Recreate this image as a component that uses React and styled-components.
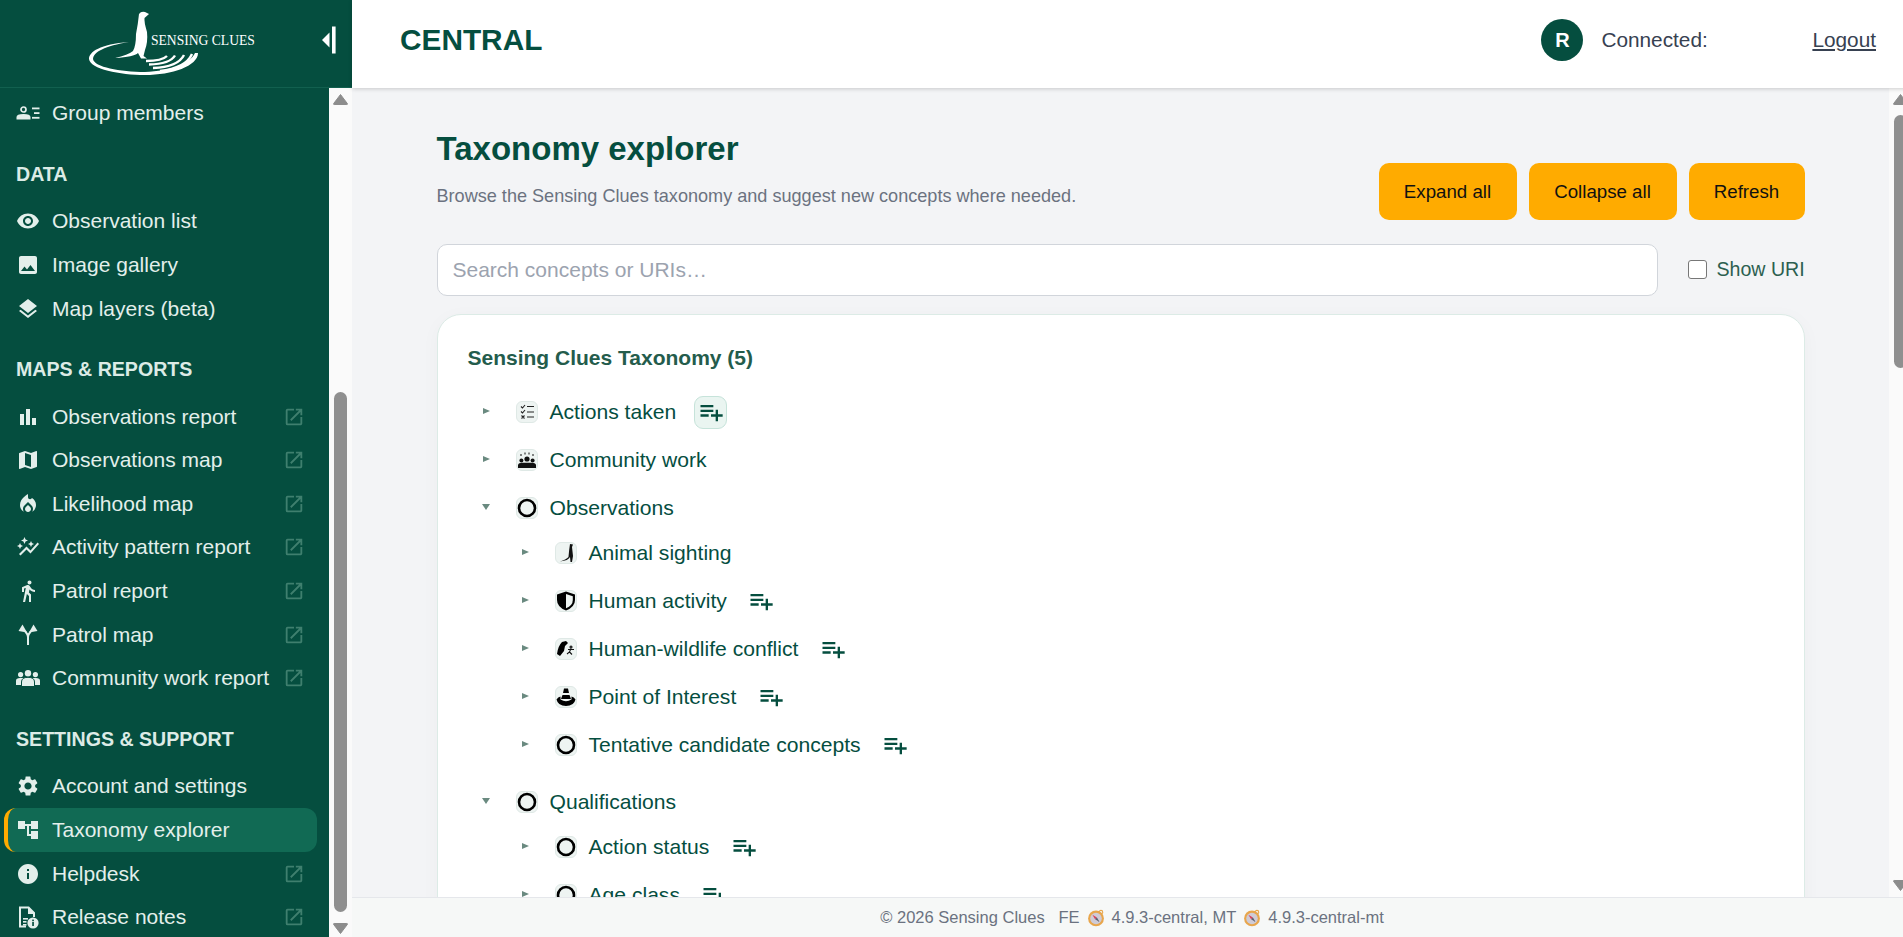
import React from "react";
import styled, { createGlobalStyle } from "styled-components";
import {
  MdVisibility, MdImage, MdLayers, MdBarChart, MdMap, MdLocalFireDepartment, MdAutoGraph, MdDirectionsWalk,
  MdSettings, MdAccountTree, MdInfo, MdOpenInNew, MdPlaylistAdd,
} from "react-icons/md";

const Global = createGlobalStyle`
  html, body { margin: 0; padding: 0; width: 1903px; height: 937px; overflow: hidden; background: #f3f4f6; }
  body, input, button { font-family: "Liberation Sans", Arial, sans-serif; }
  * { box-sizing: border-box; }
`;

const Shell = styled.div`
  display: flex; width: 1912px; height: 937px; align-items: flex-start;
`;
const Sidebar = styled.aside`
  flex: none; width: 352px; height: 940px; background: #054e3f; display: flex; flex-direction: column;
`;
const Brand = styled.div`
  flex: none; height: 88px; display: flex; align-items: center; justify-content: space-between;
  padding: 0 16px 0 85px; border-bottom: 1px solid #12604f;
`;
const CollapseButton = styled.button`
  border: 0; background: none; padding: 0; display: flex; width: 15px; height: 30px; margin-bottom: 7px;
`;
const SideBody = styled.div`
  flex: 1; min-height: 0; display: flex;
`;
const NavScroll = styled.nav`
  flex: 1; min-width: 0; overflow: hidden; padding-top: 3.5px;
`;
const Rail = styled.div`
  flex: none; width: 23px; background: #fafafa; display: flex; flex-direction: column;
`;
const RailButton = styled.svg`
  flex: none; display: block; width: 23px; height: 23px;
`;
const RailTrack = styled.div`
  flex: 1; min-height: 0; padding-left: 5px;
`;
const RailThumb = styled.div`
  width: 13px; height: ${p => p.$size}px; margin-top: ${p => p.$offset}px; background: #8f8f8f; border-radius: 7px;
`;
const SectionLabel = styled.div`
  height: 30px; line-height: 30px; margin: 24px 0 10.5px; padding-left: 16px;
  color: #dcebe6; font-weight: 700; font-size: 19.6px;
`;
const NavItem = styled.a`
  display: flex; align-items: center; height: 43.6px; margin: 0 12px 0 4px; padding-left: ${p => (p.$active ? "8px" : "12px")};
  color: #e3efeb; font-size: 21px; text-decoration: none; border-radius: 12px;
  background: ${p => (p.$active ? "#116a54" : "transparent")};
  border-left: ${p => (p.$active ? "4px solid #ffab00" : "0")};
`;
const NavIcon = styled.span`
  flex: none; width: 24px; height: 24px; margin-right: 12px; display: flex; align-items: center; justify-content: center; font-size: 24px;
`;
const NavText = styled.span` flex: 1; white-space: nowrap; `;
const ExternalIcon = styled(MdOpenInNew)`
  flex: none; color: #3f7f6e; font-size: 22px; margin-right: 12px;
`;

const RightColumn = styled.div`
  flex: none; width: 1560px; height: 937px; display: flex; flex-direction: column;
`;
const TopBar = styled.header`
  flex: none; height: 88px; background: #fff; display: flex; align-items: center; padding: 0 36px 8px 48px;
  box-shadow: 0 1px 4px rgba(0,0,0,.18); position: relative; z-index: 2;
`;
const AppName = styled.div`
  flex: 1; color: #054e3f; font-weight: 700; font-size: 29.8px;
`;
const Avatar = styled.div`
  width: 42px; height: 42px; border-radius: 50%; background: #054e3f; color: #fff; font-weight: 700; font-size: 20px;
  display: flex; align-items: center; justify-content: center; margin-right: 18px;
`;
const Connected = styled.div` color: #374151; font-size: 20.8px; width: 211px; `;
const Logout = styled.a` color: #374151; font-size: 20.8px; text-decoration: underline; `;
const MainArea = styled.div`
  flex: 1; min-height: 0; display: flex; background: #f3f4f6;
`;
const MainScroll = styled.main`
  flex: 1; min-width: 0; overflow: hidden;
`;
const Page = styled.div`
  width: 1368px; margin: 0 auto; padding-top: 41px;
`;
const PageHead = styled.div`
  display: flex; justify-content: space-between; align-items: flex-end; height: 91px;
`;
const TitleBlock = styled.div` align-self: flex-start; `;
const PageTitle = styled.h1`
  margin: 0; color: #054e3f; font-size: 33px; line-height: 40px; font-weight: 700;
`;
const PageSub = styled.p`
  margin: 13px 0 0; color: #6b7280; font-size: 18.1px; line-height: 28px;
`;
const Actions = styled.div` display: flex; gap: 12px; `;
const ActionButton = styled.button`
  height: 57px; width: ${p => p.$width}px; padding: 0; background: #ffab00; border: 0; border-radius: 10px;
  color: #111; font-size: 18.7px;
`;
const SearchRow = styled.div`
  display: flex; align-items: center; margin-top: 24px;
`;
const SearchInput = styled.input`
  flex: none; width: 1221px; height: 52px; padding: 0 15px; border: 1px solid #d1d5db; border-radius: 10px; background: #fff;
  font-size: 21px; color: #111; outline: 0;
  &::placeholder { color: #9ca3af; opacity: 1; }
`;
const UriLabel = styled.label`
  display: flex; align-items: center; margin-left: 30px; padding-bottom: 2px; color: #2c5f50; font-size: 19.6px; white-space: nowrap;
`;
const UriBox = styled.span`
  width: 19px; height: 19px; border: 1.5px solid #777; border-radius: 3px; background: #fff; margin-right: 10px;
`;
const Panel = styled.section`
  margin-top: 18px; padding: 29px 30px 0; min-height: 900px; background: #fff;
  border: 1px solid #dcebe6; border-radius: 24px; box-shadow: 0 4px 20px rgba(0,0,0,.03);
`;
const PanelTitle = styled.h2`
  margin: 0 0 16px; color: #245c4c; font-size: 21px; line-height: 28px; font-weight: 700;
`;
const ChildList = styled.div`
  margin: -3px 0 9px 39px;
`;
const Row = styled.div`
  display: flex; align-items: center; height: 48px; padding-left: 15px;
`;
const Caret = styled.span`
  flex: none; width: 0; height: 0; margin-top: -3px;
  ${p => p.$open
    ? "border-left: 4px solid transparent; border-right: 4px solid transparent; border-top: 6px solid #6a8a80; margin-left: -1px; margin-right: 26px;"
    : "border-top: 3.5px solid transparent; border-bottom: 3.5px solid transparent; border-left: 7px solid #6a8a80; margin-right: 26px;"}
`;
const IconBox = styled.span`
  flex: none; width: 22px; height: 22px; border-radius: 6px; background: #eef4f2; border: 1px solid #dfe9e6;
  display: flex; align-items: center; justify-content: center; margin-right: 12px;
`;
const RowText = styled.span`
  color: #054e3f; font-size: 21.1px; white-space: nowrap;
`;
const AddButton = styled.button`
  flex: none; width: 33px; height: 33px; margin-left: 18px; padding: 0; display: flex; align-items: center; justify-content: center;
  border-radius: 9px; color: #054e3f; font-size: 28px;
  background: ${p => (p.$hover ? "#eaf5f1" : "transparent")};
  border: 1px solid ${p => (p.$hover ? "#c6e3da" : "transparent")};
`;
const Footer = styled.footer`
  flex: none; height: 40px; background: #f6f8f7; border-top: 1px solid #e5e7eb; position: relative; z-index: 2;
  display: flex; align-items: center; justify-content: center; color: #6b7280; font-size: 16.5px; white-space: pre;
`;
const Compass = styled.svg` width: 18px; height: 18px; margin: 0 7px; flex: none; `;

const ArrowUp = () => (
  <RailButton viewBox="0 0 23 23"><path d="M11.5 6.5 L18.3 15.5 Q18.8 16.5 17.8 16.5 H5.2 Q4.2 16.5 4.7 15.5Z" fill="#8c8c8c" stroke="#8c8c8c" strokeLinejoin="round" /></RailButton>
);
const ArrowDown = () => (
  <RailButton viewBox="0 0 23 23"><path d="M11.5 16.5 L18.3 7.5 Q18.8 6.5 17.8 6.5 H5.2 Q4.2 6.5 4.7 7.5Z" fill="#8c8c8c" stroke="#8c8c8c" strokeLinejoin="round" /></RailButton>
);

const Logo = () => (
  <svg width="175" height="72" viewBox="85 4 175 72" fill="#fff">
    <path d="M139 10 Q141 7 145 8 L149 10 L144.5 14 Q144 18 147 28 Q148 38 145 46 L143.5 52 L147 54.5 L141 54.5 L138 49 Q134 53 115 54 Q128 51 133 47 Q136 42 136 30 Q138 20 139 10Z" />
    <path d="M129 38 C100 40 89 48 89 55 C90 65 120 71 145 71 C172 71 198 62 198 49 L195 49 C190 60 170 67 145 68 C120 68 94 63 93 55 C93 48 105 42 129 38Z" />
    <g fill="none" stroke="#fff" strokeWidth="2.4">
      <path d="M146 57 Q162 57 167 52" />
      <path d="M149 60.5 Q170 60 175 51.5" />
      <path d="M153 64 Q178 63 184 51" />
      <path d="M160 67 Q186 64 192 50" />
    </g>
    <text x="151" y="44" fontFamily="'Liberation Serif', serif" fontSize="13.6" fill="#fff" dy="-3.2">SENSING CLUES</text>
  </svg>
);

const Collapse = () => (
  <svg width="15" height="30" viewBox="0 0 15 30" fill="#fff">
    <path d="M8.5 7.5 L1 15 L8.5 22.5Z" />
    <rect x="11" y="1.5" width="3.6" height="27" />
  </svg>
);

const GroupIcon = () => (
  <svg width="24" height="24" viewBox="0 0 24 24" fill="currentColor">
    <circle cx="7.5" cy="8.5" r="2.5" fill="none" stroke="currentColor" strokeWidth="1.7" />
    <path d="M0.5 18.5 V16 Q0.5 13 7.5 13 Q14.5 13 14.5 16 V18.5Z" />
    <rect x="16" y="6.5" width="7.5" height="1.8" /><rect x="18" y="11.2" width="5.5" height="1.8" /><rect x="16" y="15.9" width="7.5" height="1.8" />
  </svg>
);
const ForkIcon = () => (
  <svg width="24" height="24" viewBox="0 0 24 24" fill="currentColor">
    <path d="M12 22 V14 Q12 11.5 9 8 M12 14 Q12 11.5 15 8" fill="none" stroke="currentColor" strokeWidth="2" />
    <path d="M6.5 1.5 L2.5 8 L11 9.5Z M17.5 1.5 L21.5 8 L13 9.5Z" />
  </svg>
);
const TeamIcon = () => (
  <svg width="24" height="24" viewBox="0 0 24 24" fill="currentColor">
    <circle cx="12" cy="7.2" r="3.2" /><circle cx="4.6" cy="8.6" r="2.6" /><circle cx="19.4" cy="8.6" r="2.6" />
    <path d="M0 19 V14.5 Q0 12 4 12 H20 Q24 12 24 14.5 V19Z" />
    <path d="M5.5 20 V16 Q5.5 11.3 12 11.3 Q18.5 11.3 18.5 16 V20" fill="currentColor" stroke="#054e3f" strokeWidth="1" />
  </svg>
);
const ReleaseIcon = () => (
  <svg width="24" height="24" viewBox="0 0 24 24" fill="currentColor">
    <path fillRule="evenodd" d="M3 1.5 H13 L19 7.5 V12 H17 V9 H12 V3.5 H5 V20.5 H10 V22.5 H3Z" />
    <rect x="7" y="13" width="5" height="1.6" /><rect x="7" y="16" width="3.5" height="1.6" /><rect x="7" y="19" width="3.5" height="1.6" />
    <circle cx="17" cy="18" r="5.6" />
    <rect x="16.2" y="17" width="1.7" height="4" fill="#054e3f" /><rect x="16.2" y="14.6" width="1.7" height="1.6" fill="#054e3f" />
  </svg>
);

const SmallSvg = ({ children }) => <svg width="20" height="20" viewBox="0 0 20 20">{children}</svg>;
const Ring = () => <SmallSvg><circle cx="10" cy="10" r="8" fill="none" stroke="#000" strokeWidth="2.6" /></SmallSvg>;
const Checklist = () => (
  <SmallSvg>
    <g fill="none" stroke="#222" strokeWidth="1.1">
      <path d="M4 4.5 L5.5 6 L8 3M4 9.5 L5.5 11 L8 8M4.5 13.5 L7.5 16.5M7.5 13.5 L4.5 16.5M10 4.5 H17M10 10 H17M10 15 H17" />
    </g>
  </SmallSvg>
);
const People = () => (
  <SmallSvg>
    <g fill="#111">
      <circle cx="10" cy="9" r="2.6" /><circle cx="4.4" cy="10.4" r="2" /><circle cx="15.6" cy="10.4" r="2" />
      <path d="M1 18 V15 Q1.5 12.8 5.5 12.8 H14.5 Q18.5 12.8 19 15 V18Z" />
      <rect x="3.5" y="4" width="1" height="2" /><rect x="7.5" y="2.5" width="1" height="2" /><rect x="11.5" y="2.5" width="1" height="2" /><rect x="15.5" y="4" width="1" height="2" />
    </g>
  </SmallSvg>
);
const Meerkat = () => (
  <SmallSvg>
    <path d="M14 1 L17 1.5 L16 4 L17 13 L16 19 H14.5 L14 14 Q12.5 17.5 4 18.5 Q10 16.5 12.5 14 Q13 7 14 1Z" fill="#111" />
  </SmallSvg>
);
const Shield = () => (
  <SmallSvg>
    <path d="M10 0.5 L19 3.5 V9 Q19 16 10 19.5 Q1 16 1 9 V3.5Z" fill="#000" />
    <path d="M10 3 L16.8 5.2 V9 Q16.8 14.5 10 17.2Z" fill="#eef4f2" />
  </SmallSvg>
);
const Conflict = () => (
  <SmallSvg>
    <path d="M1 15 Q2 7 6 3 L10 2 L12 4 L9 7 L8 12 L4 17Z" fill="#000" />
    <g fill="none" stroke="#111" strokeWidth="1.1"><circle cx="15" cy="8" r="1" /><path d="M15 9.5 L13.5 13 L11 15M13.5 13 L16 15.5M12 10.5 H18" /></g>
  </SmallSvg>
);
const Cone = () => (
  <SmallSvg>
    <path d="M8 1.5 H12 L13 6 H7Z M6.5 8 H13.5 L15 12 H5Z" fill="#000" />
    <path d="M0.5 12.5 Q2 10 4.5 9.5 L4.5 12.5 Q10 16 15.5 12.5 L15.5 9.5 Q18 10 19.5 12.5 Q18 19 10 19 Q2 19 0.5 12.5Z" fill="#000" />
  </SmallSvg>
);

const CompassIcon = () => (
  <Compass viewBox="0 0 20 20">
    <circle cx="10" cy="10.5" r="8.8" fill="#e8a64c" />
    <circle cx="15.5" cy="3.5" r="2" fill="none" stroke="#e8a64c" strokeWidth="1.2" />
    <circle cx="10" cy="10.5" r="6.4" fill="#cfcbd6" />
    <path d="M6 6.5 L11 9.5 L9 11.5Z" fill="#d9405a" />
    <path d="M14 14.5 L9 11.5 L11 9.5Z" fill="#5d5f6e" />
  </Compass>
);

const sections = [
  { items: [{ icon: <GroupIcon />, label: "Group members" }] },
  { title: "DATA", items: [
    { icon: <MdVisibility />, label: "Observation list" },
    { icon: <MdImage />, label: "Image gallery" },
    { icon: <MdLayers />, label: "Map layers (beta)" },
  ] },
  { title: "MAPS & REPORTS", items: [
    { icon: <MdBarChart />, label: "Observations report", ext: true },
    { icon: <MdMap />, label: "Observations map", ext: true },
    { icon: <MdLocalFireDepartment />, label: "Likelihood map", ext: true },
    { icon: <MdAutoGraph />, label: "Activity pattern report", ext: true },
    { icon: <MdDirectionsWalk />, label: "Patrol report", ext: true },
    { icon: <ForkIcon />, label: "Patrol map", ext: true },
    { icon: <TeamIcon />, label: "Community work report", ext: true },
  ] },
  { title: "SETTINGS & SUPPORT", items: [
    { icon: <MdSettings />, label: "Account and settings" },
    { icon: <MdAccountTree />, label: "Taxonomy explorer", active: true },
    { icon: <MdInfo />, label: "Helpdesk", ext: true },
    { icon: <ReleaseIcon />, label: "Release notes", ext: true },
  ] },
];

const tree = [
  { label: "Actions taken", icon: <Checklist />, add: true, hover: true },
  { label: "Community work", icon: <People /> },
  { label: "Observations", icon: <Ring />, open: true, children: [
    { label: "Animal sighting", icon: <Meerkat /> },
    { label: "Human activity", icon: <Shield />, add: true },
    { label: "Human-wildlife conflict", icon: <Conflict />, add: true },
    { label: "Point of Interest", icon: <Cone />, add: true },
    { label: "Tentative candidate concepts", icon: <Ring />, add: true },
  ] },
  { label: "Qualifications", icon: <Ring />, open: true, children: [
    { label: "Action status", icon: <Ring />, add: true },
    { label: "Age class", icon: <Ring />, add: true },
  ] },
];

const TreeNode = ({ node }) => (
  <>
    <Row>
      <Caret $open={node.open} />
      <IconBox>{node.icon}</IconBox>
      <RowText>{node.label}</RowText>
      {node.add && <AddButton $hover={node.hover}><MdPlaylistAdd /></AddButton>}
    </Row>
    {node.children && (
      <ChildList>
        {node.children.map(c => <TreeNode key={c.label} node={c} />)}
      </ChildList>
    )}
  </>
);

export default function App() {
  return (
    <Shell>
      <Global />
      <Sidebar>
        <Brand>
          <Logo />
          <CollapseButton aria-label="Collapse"><Collapse /></CollapseButton>
        </Brand>
        <SideBody>
          <NavScroll>
            {sections.map((s, i) => (
              <div key={i}>
                {s.title && <SectionLabel>{s.title}</SectionLabel>}
                {s.items.map(it => (
                  <NavItem key={it.label} $active={it.active}>
                    <NavIcon>{it.icon}</NavIcon>
                    <NavText>{it.label}</NavText>
                    {it.ext && <ExternalIcon />}
                  </NavItem>
                ))}
              </div>
            ))}
          </NavScroll>
          <Rail>
            <ArrowUp />
            <RailTrack><RailThumb $offset={281} $size={520} /></RailTrack>
            <ArrowDown />
          </Rail>
        </SideBody>
      </Sidebar>
      <RightColumn>
        <TopBar>
          <AppName>CENTRAL</AppName>
          <Avatar>R</Avatar>
          <Connected>Connected:</Connected>
          <Logout>Logout</Logout>
        </TopBar>
        <MainArea>
          <MainScroll>
            <Page>
              <PageHead>
                <TitleBlock>
                  <PageTitle>Taxonomy explorer</PageTitle>
                  <PageSub>Browse the Sensing Clues taxonomy and suggest new concepts where needed.</PageSub>
                </TitleBlock>
                <Actions>
                  <ActionButton $width={138}>Expand all</ActionButton>
                  <ActionButton $width={148}>Collapse all</ActionButton>
                  <ActionButton $width={116}>Refresh</ActionButton>
                </Actions>
              </PageHead>
              <SearchRow>
                <SearchInput placeholder="Search concepts or URIs…" />
                <UriLabel><UriBox />Show URI</UriLabel>
              </SearchRow>
              <Panel>
                <PanelTitle>Sensing Clues Taxonomy (5)</PanelTitle>
                {tree.map(n => <TreeNode key={n.label} node={n} />)}
              </Panel>
            </Page>
          </MainScroll>
          <Rail>
            <ArrowUp />
            <RailTrack><RailThumb $offset={4} $size={253} /></RailTrack>
            <ArrowDown />
          </Rail>
        </MainArea>
        <Footer>
          © 2026 Sensing Clues   FE<CompassIcon />4.9.3-central, MT<CompassIcon />4.9.3-central-mt
        </Footer>
      </RightColumn>
    </Shell>
  );
}
